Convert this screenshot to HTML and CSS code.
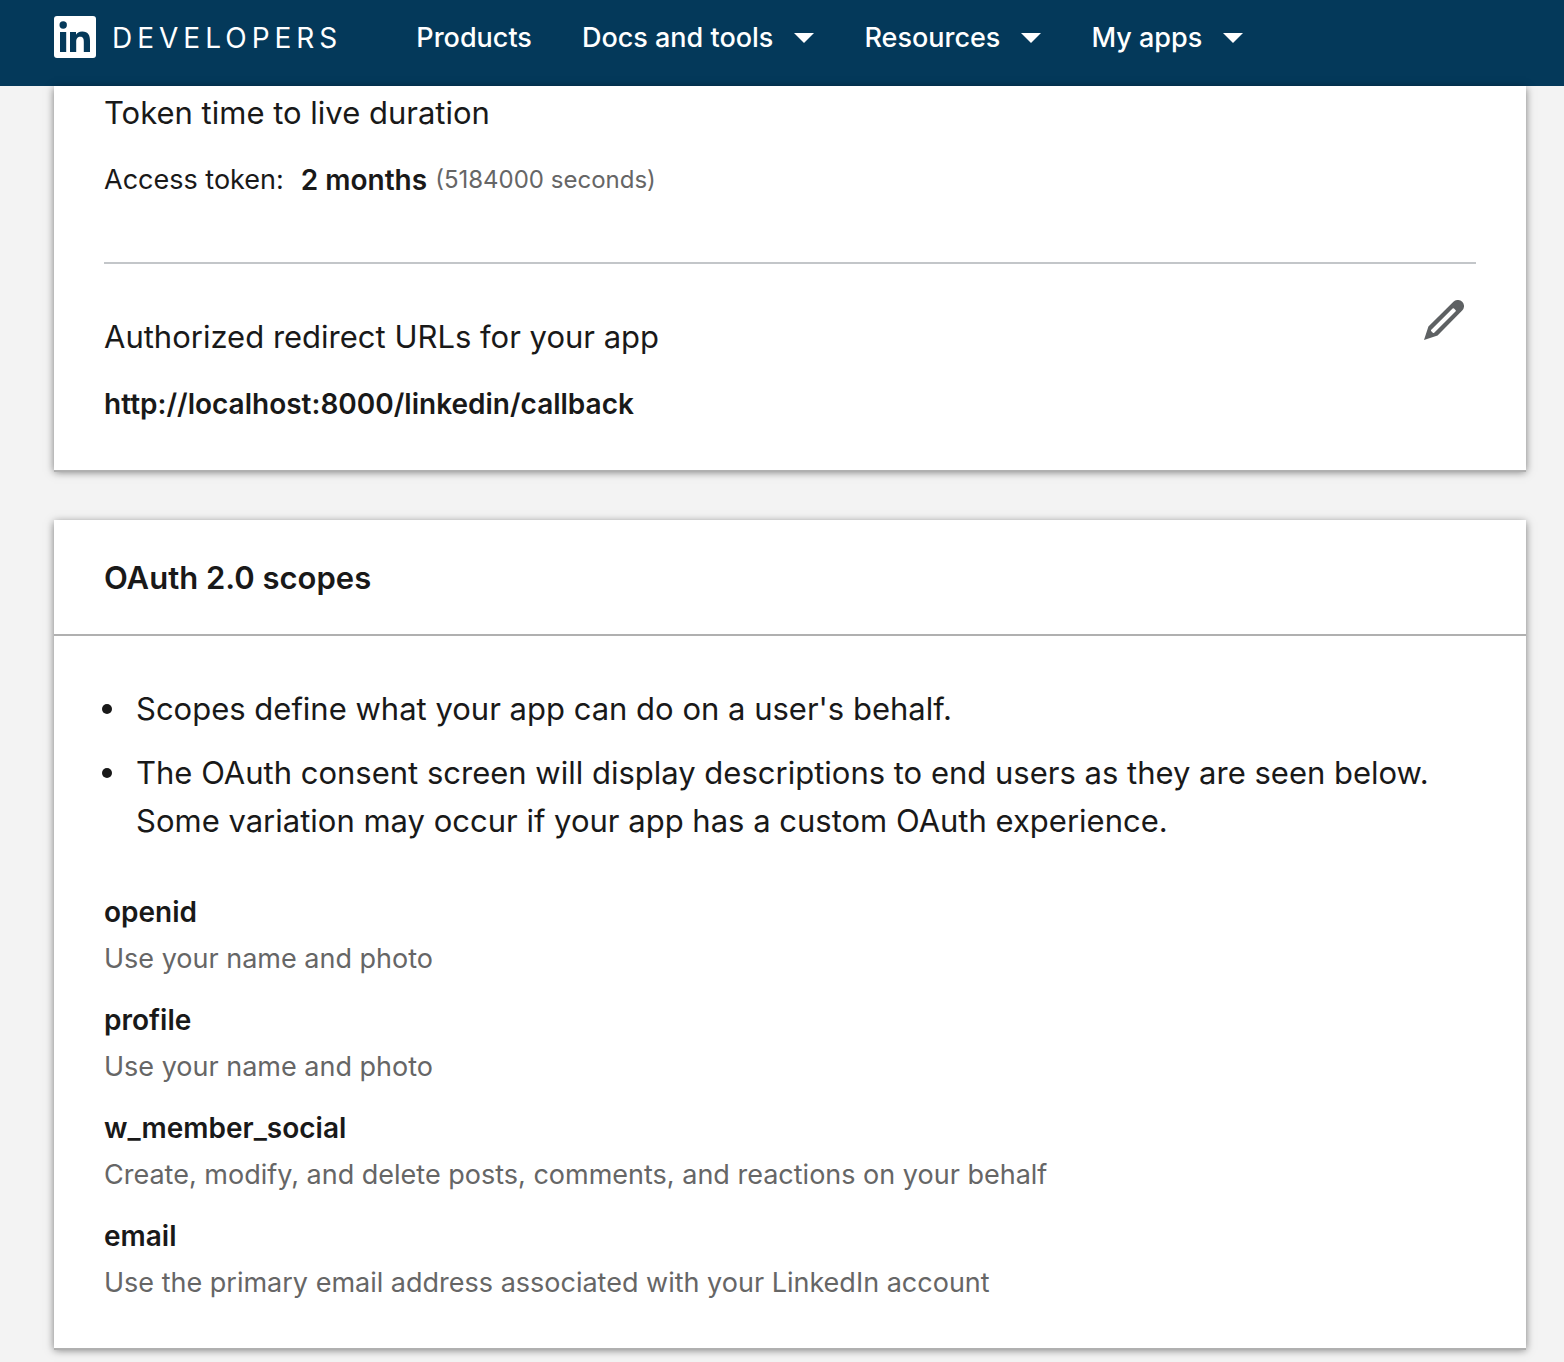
FILE: index.html
```html
<!DOCTYPE html>
<html lang="en">
<head>
<meta charset="utf-8">
<meta name="viewport" content="width=device-width, initial-scale=1">
<title>LinkedIn Developers</title>
<link rel="stylesheet" href="styles.css">
</head>
<body>
<header class="topbar">
  <a class="brand" href="#">
    <svg class="brand-logo" viewBox="0 0 42 42" aria-hidden="true">
      <rect width="42" height="42" rx="3" fill="#fff"/>
      <g fill="#04395a">
        <circle cx="9.200" cy="9" r="3.700"/>
        <rect x="6" y="16" width="6.200" height="20"/>
        <path d="M16 16h6v2.700c.9-1.700 3-3.200 6.200-3.200 6.200 0 7.800 4 7.800 9.500v11h-6.200v-9.800c0-2.700-.2-5.400-3.600-5.400-3.300 0-4 2.600-4 5.200v10H16z"/>
      </g>
    </svg>
    <span class="brand-name">DEVELOPERS</span>
  </a>
  <nav class="menu" aria-label="Main">
    <a class="menu-item" href="#">Products</a>
    <button class="menu-item" type="button">Docs and tools<span class="caret"></span></button>
    <button class="menu-item" type="button">Resources<span class="caret"></span></button>
    <button class="menu-item" type="button">My apps<span class="caret"></span></button>
  </nav>
</header>
<main class="content">
  <section class="card settings">
    <div class="setting">
      <h3 class="setting-title">Token time to live duration</h3>
      <p class="setting-value"><span class="label">Access token:</span><strong>2 months</strong><small class="seconds">(5184000 seconds)</small></p>
    </div>
    <div class="setting redirect">
      <div class="redirect-text">
        <h3 class="setting-title">Authorized redirect URLs for your app</h3>
        <p class="setting-value"><strong>http://localhost:8000/linkedin/callback</strong></p>
      </div>
      <button class="edit" type="button" aria-label="Edit redirect URLs">
        <svg class="edit-icon" viewBox="0 0 40 40" aria-hidden="true">
          <path fill="#5e6163" fill-rule="evenodd" d="M38.200 1.800a6.200 6.200 0 0 0-8.800 0L4.400 26.400 0 40l13.600-4.400L38.200 10.600a6.200 6.200 0 0 0 0-8.800zM10.200 32.700a1 1 0 0 1-1.400 0l-1.500-1.500a1 1 0 0 1 0-1.400L28.600 8.500a1 1 0 0 1 1.400 0L31.500 10a1 1 0 0 1 0 1.400z"/>
        </svg>
      </button>
    </div>
  </section>
  <section class="card">
    <h2 class="card-title">OAuth 2.0 scopes</h2>
    <div class="card-body">
      <ul class="notes">
        <li>Scopes define what your app can do on a user's behalf.</li>
        <li>The OAuth consent screen will display descriptions to end users as they are seen below. Some variation may occur if your app has a custom OAuth experience.</li>
      </ul>
      <dl class="scopes">
        <dt>openid</dt><dd>Use your name and photo</dd>
        <dt>profile</dt><dd>Use your name and photo</dd>
        <dt>w_member_social</dt><dd>Create, modify, and delete posts, comments, and reactions on your behalf</dd>
        <dt>email</dt><dd>Use the primary email address associated with your LinkedIn account</dd>
      </dl>
    </div>
  </section>
</main>
</body>
</html>
```

FILE: styles.css
```css
* { box-sizing: border-box; }
body {
  margin: 0;
  background: #f3f3f3;
  color: #191919;
  font: 27px/40px Inter, "Liberation Sans", sans-serif;
}
h2, h3, p, ul, dl, dd { margin: 0; padding: 0; }
strong { font-size: 28px; font-weight: 600; }
.topbar {
  display: flex;
  align-items: center;
  gap: 74px;
  min-height: 86px;
  padding: 0 54px 12px;
  background: #04395a;
  color: #fff;
}
.brand { display: flex; align-items: center; gap: 16px; color: inherit; text-decoration: none; }
.brand-logo { width: 42px; height: 42px; }
.brand-name { padding-top: 2px; font-size: 28px; letter-spacing: 5px; }
.menu { display: flex; align-items: center; gap: 50px; }
.menu-item {
  display: flex;
  align-items: center;
  gap: 21px;
  padding: 2px 0 0;
  border: 0;
  background: none;
  color: inherit;
  font: inherit;
  font-weight: 500;
  text-decoration: none;
  white-space: nowrap;
}
.caret { border: 10px solid transparent; border-top-color: #fff; border-bottom: 0; }
.content { padding: 0 38px 0 54px; }
.card {
  margin-bottom: 50px;
  background: #fff;
  box-shadow: 0 2px 0 #b0b0b0, 0 2px 8px rgba(0, 0, 0, .5);
}
.settings { padding: 0 50px; }
.setting { padding: 3px 0 62px; }
.setting-title { font-size: 31px; line-height: 48px; font-weight: 400; }
.setting-value { display: flex; align-items: center; margin-top: 23px; }
.label { margin-right: 17px; }
.seconds { margin-left: 8px; font-size: 24px; color: #666; }
.redirect {
  display: flex;
  justify-content: space-between;
  align-items: flex-start;
  padding: 36px 0 46px;
  border-top: 2px solid #c3c6c9;
}
.redirect-text { padding-top: 13px; }
.edit { padding: 0 12px; border: 0; background: none; }
.edit-icon { display: block; width: 40px; height: 40px; }
.card-title {
  padding: 34px 50px 32px;
  border-bottom: 2px solid #b0b0b0;
  font-size: 31px;
  line-height: 48px;
  font-weight: 600;
}
.card-body { padding: 49px 50px 43px 48px; }
.notes { list-style: none; font-size: 31px; line-height: 48px; }
.notes li { display: flex; gap: 24px; }
.notes li::before {
  flex: none;
  width: 10px;
  height: 10px;
  margin-top: 19px;
  border-radius: 50%;
  background: currentColor;
  content: "";
}
.notes li + li { margin-top: 16px; }
.scopes { margin: 43px 0 0 2px; }
.scopes dt { font-size: 28px; font-weight: 600; line-height: 48px; }
.scopes dd { margin-bottom: 15px; padding-top: 1px; color: #666; line-height: 44px; }
.scopes dd:last-child { margin-bottom: 0; }
```
